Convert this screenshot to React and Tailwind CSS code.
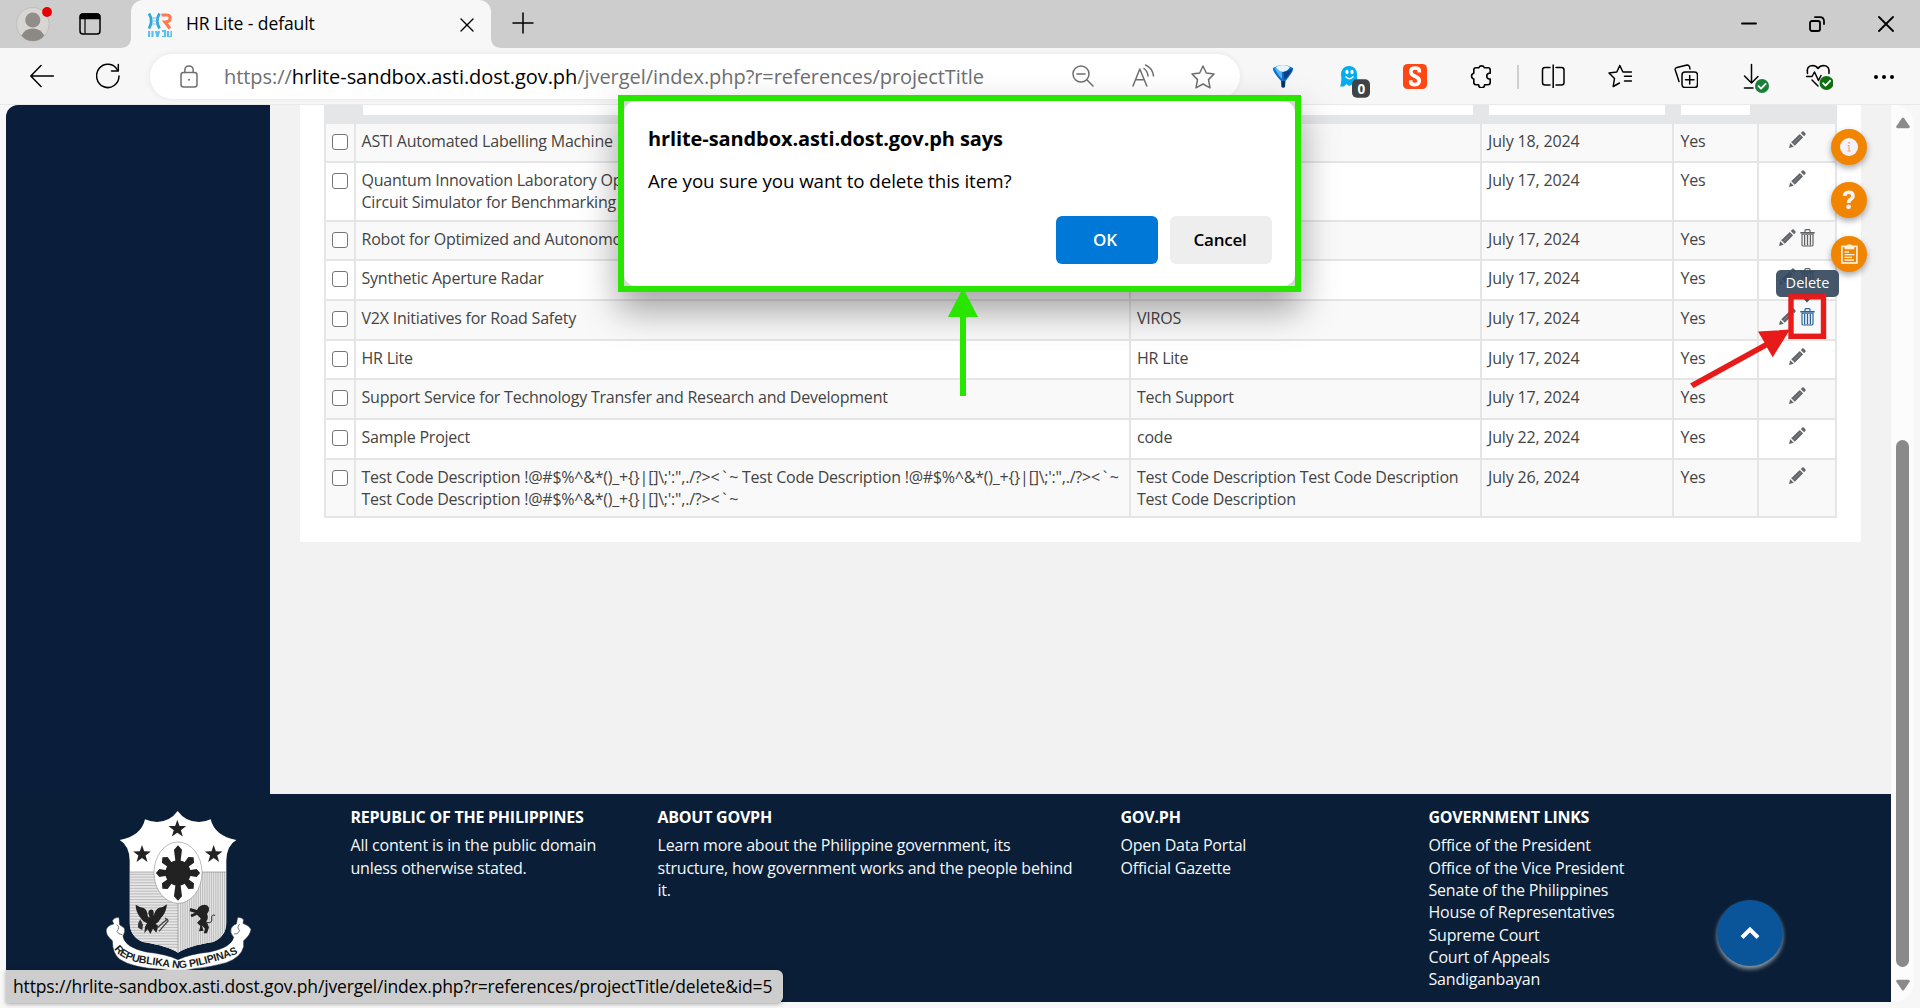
import React from "react";

const PROJECTS = [
  { h: "h-[39px]", lines: ["ASTI Automated Labelling Machine"], code: [], date: "July 18, 2024" },
  { h: "h-[59px]", lines: ["Quantum Innovation Laboratory Op", "Circuit Simulator for Benchmarking"], code: [], date: "July 17, 2024" },
  { h: "h-[39px]", lines: ["Robot for Optimized and Autonomo"], code: [], date: "July 17, 2024", trash: true },
  { h: "h-[40px]", lines: ["Synthetic Aperture Radar"], code: [], date: "July 17, 2024", trash: true },
  { h: "h-[40px]", lines: ["V2X Initiatives for Road Safety"], code: ["VIROS"], date: "July 17, 2024", trash: true, active: true },
  { h: "h-[39px]", lines: ["HR Lite"], code: ["HR Lite"], date: "July 17, 2024" },
  { h: "h-[40px]", lines: ["Support Service for Technology Transfer and Research and Development"], code: ["Tech Support"], date: "July 17, 2024" },
  { h: "h-[40px]", lines: ["Sample Project"], code: ["code"], date: "July 22, 2024" },
  {
    h: "h-[58px]",
    lines: [
      "Test Code Description !@#$%^&*()_+{}|[]\\;':\",./?><`~ Test Code Description !@#$%^&*()_+{}|[]\\;':\",./?><`~",
      "Test Code Description !@#$%^&*()_+{}|[]\\;':\",./?><`~",
    ],
    code: ["Test Code Description Test Code Description", "Test Code Description"],
    date: "July 26, 2024",
  },
];

const FOOTER = [
  { w: "w-[307px]", title: "REPUBLIC OF THE PHILIPPINES", lines: ["All content is in the public domain", "unless otherwise stated."] },
  {
    w: "w-[463px]",
    title: "ABOUT GOVPH",
    lines: ["Learn more about the Philippine government, its", "structure, how government works and the people behind", "it."],
  },
  { w: "w-[308px]", title: "GOV.PH", lines: ["Open Data Portal", "Official Gazette"] },
  {
    w: "w-[300px]",
    title: "GOVERNMENT LINKS",
    lines: [
      "Office of the President",
      "Office of the Vice President",
      "Senate of the Philippines",
      "House of Representatives",
      "Supreme Court",
      "Court of Appeals",
      "Sandiganbayan",
    ],
  },
];

function Svg({ box = "0 0 24 24", className, children, sw = 1.5 }) {
  return (
    <svg viewBox={box} className={"block shrink-0 " + className} fill="none" stroke="currentColor" strokeWidth={sw} strokeLinecap="round" strokeLinejoin="round">
      {children}
    </svg>
  );
}

function Pencil() {
  return (
    <svg viewBox="0 0 17 17" className="block size-[17px] shrink-0" fill="#616569">
      <path d="M0 17 1.2 12.2 4.8 15.8Z" />
      <path d="M2.2 11.2 10.8 2.9 14.1 6.2 5.8 14.8Z" />
      <path d="M11.8 1.9 13.3.5Q14 0 14.7.6L16.4 2.3Q17 3 16.4 3.8L15.1 5.2Z" />
      <path d="M4.2 12.8 12 5" stroke="#8b8e91" strokeWidth=".8" />
    </svg>
  );
}

function Trash({ active }) {
  return (
    <svg viewBox="0 0 15 18" className={"block h-[18px] w-[15px] shrink-0 " + (active ? "text-[#2a6496]" : "text-[#5f6163]")} fill="none" stroke="currentColor">
      <path d="M5 3V1.6Q5 .7 5.8.7H9.2Q10 .7 10 1.6V3" strokeWidth="1.2" />
      <path d="M.3 3.7H14.7" strokeWidth="1.5" />
      <path d="M2 5.2V15.8Q2 17 3.2 17H11.8Q13 17 13 15.8V5.2Z" strokeWidth="1.2" />
      <path d="M4.6 6V16.5M7.5 6V16.5M10.4 6V16.5" strokeWidth="1.3" />
    </svg>
  );
}

function Star5({ x, y, r }) {
  const pts = Array.from({ length: 10 }, (_, i) => {
    const a = (Math.PI / 5) * i - Math.PI / 2;
    const q = i % 2 ? r * 0.4 : r;
    return `${(x + q * Math.cos(a)).toFixed(1)},${(y + q * Math.sin(a)).toFixed(1)}`;
  }).join(" ");
  return <polygon points={pts} fill="#222" />;
}

function Seal() {
  const hatchRows = Array.from({ length: 27 }, (_, i) => 281 + i * 8.4);
  const hatchCols = Array.from({ length: 22 }, (_, i) => 303 + i * 6.6);
  return (
    <svg viewBox="70 85 450 495" className="block h-[165px] w-[150px] shrink-0">
      <defs>
        <clipPath id="shield">
          <path d="M150 274H440V425Q440 468 400 484Q325 496 295 516Q265 496 190 484Q150 468 150 425Z" />
        </clipPath>
        <path id="ribbon" d="M104 504Q122 538 195 549T294 563Q335 562 395 545T480 515" />
      </defs>
      <path
        d="M294 91Q318 124 358 124Q380 122 393 116Q405 166 470 178Q441 194 440 240V425Q440 468 400 484Q325 496 295 516Q265 496 190 484Q150 468 150 425V240Q149 194 120 178Q185 166 196 116Q210 123 232 124Q272 122 294 91Z"
        fill="#fff"
      />
      <g clipPath="url(#shield)">
        <rect x="150" y="274" width="290" height="245" fill="#e6e6e6" />
        <g stroke="#959595" strokeWidth="1.6">
          {hatchRows.map((y) => (
            <path key={y} d={`M150 ${y}H295`} />
          ))}
          {hatchCols.map((x) => (
            <path key={x} d={`M${x} 274V516`} />
          ))}
        </g>
      </g>
      <path d="M150 274H440M295 366V514" stroke="#666" strokeWidth="1.5" />
      <ellipse cx="295" cy="276" rx="72" ry="92" fill="#fff" stroke="#777" strokeWidth="1.5" />
      <circle cx="295" cy="277" r="38" fill="#222" />
      {[0, 45, 90, 135, 180, 225, 270, 315].map((a) => (
        <path
          key={a}
          transform={`rotate(${a} 295 277) translate(295 277) scale(1 ${a % 180 === 0 ? 1 : 0.8})`}
          d="M-7 -30L-12 -70L0 -83L12 -70L7 -30Z"
          fill="#222"
        />
      ))}
      <Star5 x={293} y={145} r={28} />
      <Star5 x={187} y={221} r={28} />
      <Star5 x={402} y={221} r={28} />
      <path
        d="M168 372Q180 380 192 382Q202 386 204 404Q206 414 210 408Q202 394 210 388Q220 384 222 394V406Q226 386 238 381Q252 380 262 371Q260 396 244 412Q238 424 228 430L236 436L230 456L220 444L212 460L204 446L194 458L196 438L202 428Q188 422 180 408Q168 392 168 372Z"
        fill="#222"
      />
      <path d="M182 416Q172 430 176 442L188 448L190 432Z" fill="#333" />
      <path d="M232 442 264 414M238 452 266 420M256 412 266 420" stroke="#444" strokeWidth="4" />
      <path
        d="M366 374Q382 368 388 382Q390 392 382 400Q388 412 380 422L388 440L382 458H372L376 444L366 434L372 450L358 452L362 436L352 426L364 414L352 402L336 410L332 402L346 396L330 392L332 382L352 388Q356 378 366 374Z"
        fill="#222"
      />
      <path d="M382 426Q400 428 396 412Q396 400 406 404" fill="none" stroke="#222" strokeWidth="3" />
      <path
        d="M98 480Q76 462 80 446Q84 434 102 430L98 420Q104 410 118 410L120 432L134 442Q138 452 130 466Q134 500 200 514Q260 520 295 537Q330 520 390 514Q456 500 462 470Q450 456 454 444Q460 432 470 430L474 410Q488 410 492 418L490 428Q510 436 514 446Q512 464 492 480V498Q484 530 440 546Q390 560 345 564L295 574L245 566Q160 562 120 536Q98 518 98 480Z"
        fill="#fff"
        stroke="#0a1f37"
        strokeWidth="1.5"
      />
      <path d="M112 432Q122 440 112 452Q116 462 128 462M480 430Q470 440 480 450Q474 462 464 460" fill="none" stroke="#333" strokeWidth="2" />
      <text className="font-['Liberation_Sans']" fontSize="32" fontWeight="700" fill="#222">
        <textPath href="#ribbon" textLength="392" lengthAdjust="spacing">
          REPUBLIKA NG PILIPINAS
        </textPath>
      </text>
    </svg>
  );
}

function CheckBadge({ color }) {
  return (
    <>
      <circle cx="7" cy="7" r="7" fill={color} stroke="none" />
      <path d="M3.6 7.2 6 9.6 10.6 4.8" stroke="#fff" strokeWidth="1.8" fill="none" />
    </>
  );
}

function TitleBar() {
  return (
    <div className="flex h-12 items-start bg-[#cdcdcd] text-black">
      <svg viewBox="0 0 40 48" className="ml-[13px] h-12 w-10 shrink-0">
        <ellipse cx="19.8" cy="24.2" rx="16.3" ry="16.8" fill="#d8d6d2" stroke="#c2bfb9" />
        <ellipse cx="19.8" cy="20" rx="7.6" ry="7.6" fill="#918e8a" />
        <path d="M8.4 35.5Q12 28.5 19.8 28.5T31.4 35.5Q27 41 19.8 41T8.4 35.5Z" fill="#8c8985" />
        <circle cx="34" cy="12" r="4.9" fill="#e60000" />
      </svg>
      <Svg box="0 0 22 22" className="mt-[13px] ml-[26px] size-[22px]">
        <rect x="1" y="1" width="20" height="20" rx="3" />
        <path d="M1.5 5.5V4Q1.5 1 4 1H18Q20.5 1 20.5 4V5.5Z" fill="#000" />
        <path d="M6 6V20" strokeWidth="1.2" />
      </Svg>
      <div className="ml-[19px] flex w-[11px] flex-col">
        <div className="h-[37px]" />
        <svg viewBox="0 0 11 11" className="block size-[11px]">
          <path d="M0 11H11V0Q11 11 0 11Z" fill="#f7f7f7" />
        </svg>
      </div>
      <div className="flex h-12 w-[360px] items-start rounded-t-xl bg-[#f7f7f7]">
        <svg viewBox="0 0 24 24" className="mt-[13px] ml-[17px] block size-6 shrink-0">
          <path d="M1 .5Q5.5 8 1 15.5M11.5.5Q7 8 11.5 15.5" stroke="#2fa8e0" strokeWidth="2.8" fill="none" />
          <path d="M4 5H9M4 8H9M4 11H9" stroke="#6fc6ec" strokeWidth="1.2" fill="none" />
          <path d="M13.5 2H19Q22.5 2 22 6Q21.5 9 17 9L22 15.5" stroke="#ff7a52" strokeWidth="3.2" fill="none" />
          <path d="M1 18V24M4.5 18V24M8 18 9.5 24 11 18M14 18H17V24H14M20 18V24H23.5V18" stroke="#5cc0ec" strokeWidth="2.2" fill="none" />
        </svg>
        <span className="mt-[11px] ml-[14px] w-[200px] text-[17.5px] leading-6 tracking-[-0.08px]">HR Lite - default</span>
        <Svg box="0 0 14 14" className="mt-[18px] ml-[74px] size-[14px]" sw={1.4}>
          <path d="M1 1 13 13M13 1 1 13" />
        </Svg>
      </div>
      <svg viewBox="0 0 11 11" className="mt-[37px] block size-[11px]">
        <path d="M11 11H0V0Q0 11 11 11Z" fill="#f7f7f7" />
      </svg>
      <Svg box="0 0 22 22" className="mt-[12px] ml-[10px] size-[22px]">
        <path d="M11 1V21M1 11H21" />
      </Svg>
      <div className="ml-auto flex pt-[15.5px] pr-[26.5px]">
        <Svg box="0 0 16 16" className="mr-[52px] size-4" sw={1.8}>
          <path d="M1 7.5H15" />
        </Svg>
        <Svg box="0 0 16 16" className="mr-[53px] size-4" sw={1.8}>
          <rect x="1" y="5" width="10" height="10" rx="2" />
          <path d="M6 1.2H11Q15 1.2 15 5.5V8" />
        </Svg>
        <Svg box="0 0 16 16" className="size-4" sw={1.8}>
          <path d="M1 1 15 15M15 1 1 15" />
        </Svg>
      </div>
    </div>
  );
}

function Toolbar() {
  return (
    <div className="flex h-[57px] items-start border-b border-[#e9e9e9] bg-[#f7f7f7] text-black">
      <Svg box="0 0 24 24" className="mt-4 ml-[30px] size-6">
        <path d="M23.5 12H1M11 1.5 .8 12 11 22.5" />
      </Svg>
      <Svg box="0 0 24 26" className="mt-[15px] ml-[42px] h-[26px] w-6">
        <path d="M21.5 7A11.2 11.7 0 1 0 23 13" />
        <path d="M22.3 1.5V8H15.5" />
      </Svg>
      <div className="mt-1.5 ml-[30px] flex h-[45px] w-[1090px] items-start rounded-full bg-white text-[#6f6f6f] shadow-[0_0_6px_rgba(0,0,0,0.08)]">
        <Svg box="0 0 18 23" className="mt-[11px] ml-[30px] h-[23px] w-[18px]">
          <rect x="1" y="7.5" width="16" height="14.5" rx="2.5" />
          <path d="M4.8 7.5V5Q5 1 9 1T13.2 5V7.5" />
          <circle cx="9" cy="14.7" r="1" fill="currentColor" stroke="none" />
        </Svg>
        <p className="mt-[8.5px] ml-[26px] w-[848px] text-[20px] leading-7 tracking-[-0.06px] whitespace-nowrap">
          https://<span className="text-black">hrlite-sandbox.asti.dost.gov.ph</span>/jvergel/index.php?r=references/projectTitle
        </p>
        <Svg box="0 0 22 22" className="mt-[11px] size-[22px]">
          <circle cx="9" cy="9" r="8" />
          <path d="M14.8 14.8 21 21M5 9H13" />
        </Svg>
        <Svg box="0 0 24 24" className="mt-[10px] ml-[37px] size-6">
          <path d="M2 22 8.8 5 15.8 22M4.5 15.8H13.2" />
          <path d="M13 4.5Q16.5 7 17 12M14.5 1Q21.5 4 22.5 12" />
        </Svg>
        <Svg box="0 0 24 24" className="mt-[11px] ml-[36px] size-6">
          <path d="M12 1 15.3 8 23 9 17.5 14.6 19 22.8 12 19 5 22.8 6.5 14.6 1 9 8.7 8Z" />
        </Svg>
      </div>
      <svg viewBox="0 0 24 26" className="mt-[15px] ml-[31px] block h-[26px] w-6 shrink-0">
        <path d="M2 5Q12-1 22 5 23 8 14.5 18L14 24Q12 26 10.5 24L10 18Q1 8 2 5Z" fill="#0a6fd0" />
        <path d="M3.5 5Q8 2 11 2.5L11 16Q7 12 4.5 7Z" fill="#58b4f5" />
        <path d="M5 4Q12 0 19 4Q17 8 12 9Q7 8 5 4Z" fill="#e4f5ff" />
        <path d="M12.5 9Q18 8 21.5 5.5Q20 10 13.5 17Z" fill="#0b3f80" />
        <path d="M10.4 18H14.2L13.8 24H10.7Z" fill="#093258" />
      </svg>
      <svg viewBox="0 0 32 34" className="mt-[17px] ml-[43px] block h-[34px] w-8 shrink-0">
        <path d="M3 9Q4 1 11 1T19 9V19L16 17 13.5 20 11 21 8.5 19 6 21.5 2 21.5Q4 17 3 9Z" fill="#00aef0" />
        <ellipse cx="9" cy="7" rx="1.6" ry="2.3" fill="#fff" />
        <ellipse cx="14" cy="7" rx="1.6" ry="2.3" fill="#fff" />
        <path d="M7.5 11.5Q11.5 16 15.5 11.5" stroke="#fff" strokeWidth="1.4" fill="none" />
        <rect x="14" y="14.2" width="18" height="18.5" rx="5" fill="#3f4348" />
        <text x="23.3" y="28.6" textAnchor="middle" fontSize="13.5" fontWeight="700" fill="#fff">
          0
        </text>
      </svg>
      <svg viewBox="0 0 24 25" className="mt-4 ml-[33px] block h-[25px] w-6 shrink-0">
        <rect width="24" height="25" rx="4.5" fill="#ff4713" />
        <path d="M16.3 8.5V6.5Q16 4 12 4T7.8 7.3Q7.6 10.5 12 12.2T16.3 17.2Q16 20.6 12 20.6T7.8 18.5V16.3" stroke="#fff" strokeWidth="3.6" fill="none" />
      </svg>
      <Svg className="mt-4 ml-[42px] size-6" sw={1.6}>
        <path d="M7 3.8H9.8A3 3 0 0 1 15.4 3.8H19Q21.2 3.8 21.2 6V9.2H20A3 3 0 0 0 20 15H21.2V18.6Q21.2 20.8 19 20.8H15.6A3 3 0 0 1 9.6 20.8H7Q4.8 20.8 4.8 18.6V15A3 3 0 0 1 4.8 9.2V6Q4.8 3.8 7 3.8Z" />
      </Svg>
      <div className="mt-[17px] ml-[24px] h-6 w-0.5 bg-[#cfcfcf]" />
      <Svg className="mt-4 ml-[22px] size-6">
        <path d="M9 3.5H4Q1.5 3.5 1.5 6V18.5Q1.5 21 4 21H9M15 3.5H20.5Q23 3.5 23 6V18.5Q23 21 20.5 21H15M12.2 1V24" />
      </Svg>
      <Svg className="mt-4 ml-[43px] size-6">
        <path d="M16 8 14.8 7.8 11.8 1.5 8.8 8 1 9 6.5 14.5 5.2 22.5 11.5 19M16.5 12.2H23.5M16.5 17H23.5M15 8H23.5" />
      </Svg>
      <Svg className="mt-4 ml-[42px] size-6">
        <path d="M5 17.5Q2 8 1.2 6Q.8 4 3 3.4L13 1.1Q15.5 1 16 5" />
        <rect x="8" y="8" width="15.5" height="15.5" rx="3" />
        <path d="M15.7 11.5V20M11.5 15.7H20" />
      </Svg>
      <Svg box="0 0 28 30" className="mt-[15px] ml-[44px] h-[30px] w-7">
        <path d="M9.5 1.5V19M2.5 13 9.5 20 16 13.5M2.5 25H11" />
        <g transform="translate(13 16)">
          <CheckBadge color="#1a8038" />
        </g>
      </Svg>
      <Svg box="0 0 28 30" className="mt-[15px] ml-[35px] h-[30px] w-7">
        <path d="M2.5 10.5Q1 3 7.5 2.5Q11 2.5 13 5.5Q15 2.5 18.8 2.5Q25 3 24 10.5M1.5 13.5H7L9.5 9 13.5 17.5 16 12.5M7 17 13 23" />
        <g transform="translate(14.5 13)">
          <CheckBadge color="#107010" />
        </g>
      </Svg>
      <svg viewBox="0 0 24 24" className="mt-[17px] ml-[39px] block size-6 shrink-0">
        <circle cx="4" cy="12" r="2" />
        <circle cx="12" cy="12" r="2" />
        <circle cx="20" cy="12" r="2" />
      </svg>
    </div>
  );
}

function Line({ text }) {
  return (
    <p>
      {text.split("`").map((part, i) => (
        <React.Fragment key={i}>
          {i > 0 && <span className="px-[2.8px]">`</span>}
          {part}
        </React.Fragment>
      ))}
    </p>
  );
}

function ProjectTable() {
  return (
    <div className="w-[1513px] border-x-2 border-[#e5e6e8] text-[16px] leading-[22.3px] tracking-[-0.22px] text-[#444]">
      <div className="flex h-[19px] items-start bg-[#e5e6e8]">
        <div className="ml-[37px] h-[10px] w-[760px] bg-white" />
        <div className="ml-[15px] h-[10px] w-[335px] bg-white" />
        <div className="ml-4 h-[10px] w-[176px] bg-white" />
        <div className="ml-4 h-[10px] w-[69px] bg-white" />
      </div>
      {PROJECTS.map((p, i) => (
        <div key={i} className={"flex border-b-2 border-[#e5e5e5] " + p.h + (i % 2 ? " bg-white" : " bg-[#f9f9f9]")}>
          <div className="w-[30px] shrink-0 border-r-2 border-[#e5e5e5] pt-[10px] pl-[6px]">
            <div className="size-4 rounded-[3px] border-[1.5px] border-[#767676] bg-white" />
          </div>
          <div className="w-[775px] shrink-0 border-r-2 border-[#e5e5e5] pt-[5.5px] pl-[5.5px] whitespace-nowrap">
            {p.lines.map((t, k) => (
              <Line key={k} text={t} />
            ))}
          </div>
          <div className="w-[351px] shrink-0 border-r-2 border-[#e5e5e5] pt-[5.5px] pl-[6px] whitespace-nowrap">
            {p.code.map((t, k) => (
              <Line key={k} text={t} />
            ))}
          </div>
          <div className="w-[192px] shrink-0 border-r-2 border-[#e5e5e5] pt-[5.5px] pl-[6px] tracking-[-0.15px]">{p.date}</div>
          <div className="w-[85px] shrink-0 border-r-2 border-[#e5e5e5] pt-[5.5px] pl-[6.5px]">Yes</div>
          <div className="flex grow items-start justify-center gap-1 pt-[7px]">
            <Pencil />
            {p.trash && <Trash active={p.active} />}
          </div>
        </div>
      ))}
    </div>
  );
}

function ConfirmDialog() {
  return (
    <div className="absolute top-[95px] left-[618px] h-[197px] w-[683px] border-[6px] border-[#28e600] bg-[#d6d6d6] shadow-[0_18px_34px_rgba(0,0,0,0.36)]">
      <div className="flex h-full flex-col rounded-xl bg-white pr-[23px] pl-6 text-black">
        <h2 className="mt-[23px] text-[20px] leading-[30px] font-bold tracking-[-0.1px]">hrlite-sandbox.asti.dost.gov.ph says</h2>
        <p className="mt-[13px] text-[18.75px] leading-[28px] tracking-[-0.08px]">Are you sure you want to delete this item?</p>
        <div className="mt-[21px] flex justify-end gap-3 text-[17px] font-semibold tracking-[-0.2px]">
          <button className="h-12 w-[102px] rounded-md bg-[#0078d7] pr-1 text-white">OK</button>
          <button className="h-12 w-[102px] rounded-md bg-[#eee] pr-0.5">Cancel</button>
        </div>
      </div>
    </div>
  );
}

function FloatButton({ children }) {
  return <div className="flex size-9 items-center justify-center rounded-full bg-[#f28500] shadow-[0_3px_6px_rgba(0,0,0,0.35)]">{children}</div>;
}

function FloatingTools() {
  return (
    <div className="absolute top-[129px] left-[1831px] flex flex-col gap-[17px]">
      <FloatButton>
        <svg viewBox="0 0 18 18" className="block size-[18px]">
          <circle cx="9" cy="9" r="9" fill="#f3f1fb" />
          <rect x="8.3" y="4" width="1.5" height="1.6" fill="#f2a24a" />
          <path d="M7.6 7.5H9V12.8M7.4 13H10.6" stroke="#f2a24a" strokeWidth="1" fill="none" />
        </svg>
      </FloatButton>
      <FloatButton>
        <svg viewBox="0 0 14 20" className="block h-5 w-3.5">
          <path d="M2.5 6Q2.8 2.3 6.8 2.2T11 5.8Q11 8 8.6 9.3Q6.6 10.4 6.6 13" stroke="#f3f1fb" strokeWidth="3.6" fill="none" />
          <circle cx="6.6" cy="16.8" r="2.4" fill="#f3f1fb" />
        </svg>
      </FloatButton>
      <div className="pt-px">
        <FloatButton>
          <svg viewBox="0 0 17 20" className="block h-5 w-[17px]" fill="none" stroke="#fff3e0">
            <rect x=".9" y="2.4" width="15" height="16.6" strokeWidth="1.6" />
            <path d="M4 4.8V3Q6 3 6.4 1H10.4Q10.8 3 12.8 3V4.8Z" fill="#fff3e0" />
            <path d="M3.5 8H8M3.5 10.7H13.5M3.5 13.3H11M3.5 16H13" strokeWidth="1.3" />
          </svg>
        </FloatButton>
      </div>
    </div>
  );
}

export default function App() {
  return (
    <div className="relative h-[1008px] w-[1920px] overflow-hidden bg-[#f7f7f7] font-['Open_Sans','Noto_Sans',sans-serif]">
      <TitleBar />
      <Toolbar />

      <div className="ml-1.5 flex h-[897px] w-[1908px] overflow-hidden rounded-tl-xl rounded-tr-[20px] rounded-br-[20px]">
        <div className="flex w-[1885px] shrink-0 flex-col">
          <div className="flex h-[689px]">
            <div className="w-[264px] shrink-0 bg-[#0a1e3c]" />
            <div className="grow bg-[#f2f2f2] pl-[30px]">
              <div className="h-[437px] w-[1561px] bg-white pl-6">
                <ProjectTable />
              </div>
            </div>
          </div>
          <footer className="flex h-[208px] bg-[#0a1f37] text-[16px] leading-[22.3px] tracking-[-0.2px] text-[#f6f7f8]">
            <div className="w-[344.5px] shrink-0 pt-[14.5px] pl-[97px]">
              <Seal />
            </div>
            {FOOTER.map((c) => (
              <div key={c.title} className={"shrink-0 pt-[11.5px] whitespace-nowrap " + c.w}>
                <h3 className="mb-[6.7px] font-bold tracking-[-0.24px] text-white">{c.title}</h3>
                {c.lines.map((t) => (
                  <p key={t}>{t}</p>
                ))}
              </div>
            ))}
          </footer>
        </div>
        <div className="flex w-[23px] flex-col items-center bg-[#fcfcfc]">
          <svg viewBox="0 0 14 12" className="mt-3 block h-3 w-3.5" fill="#8a8a8a">
            <path d="M6 1Q7 0 8 1L13.8 9.5Q14 11.3 12.5 11.3H1.5Q0 11.3.2 9.5Z" />
          </svg>
          <div className="mt-[311px] h-[527px] w-[13px] rounded-full bg-[#8a8a8a]" />
          <svg viewBox="0 0 14 12" className="mt-3 block h-3 w-3.5" fill="#8a8a8a">
            <path d="M6 11Q7 12 8 11L13.8 2.5Q14 .7 12.5.7H1.5Q0 .7.2 2.5Z" />
          </svg>
        </div>
      </div>

      <div className="absolute top-[970px] left-1.5 flex h-[33px] w-[777px] items-center rounded-tr-md rounded-br-md bg-[#cdcdcd] pl-[7px] text-[17.5px] tracking-[-0.16px] whitespace-nowrap text-black shadow-[0_1px_4px_rgba(0,0,0,0.35)]">
        https://hrlite-sandbox.asti.dost.gov.ph/jvergel/index.php?r=references/projectTitle/delete&amp;id=5
      </div>

      <div className="absolute top-[900px] left-[1717px] flex size-[66px] items-center justify-center rounded-full bg-[#0a5599] shadow-[0_3px_4px_rgba(255,255,255,0.55)]">
        <svg viewBox="0 0 20 14" className="block h-3.5 w-5" fill="none" stroke="#fff" strokeWidth="4">
          <path d="M2 11.5 10 3.5 18 11.5" />
        </svg>
      </div>

      <FloatingTools />

      <div className="absolute top-[270px] left-[1776px] flex h-[27px] w-[63px] items-center justify-center rounded-[5px] bg-[#34495e]/92 pb-0.5 text-[14.5px] text-white">Delete</div>
      <svg viewBox="0 0 160 110" className="absolute top-[290px] left-[1680px] block h-[110px] w-40">
        <path d="M122 7H132L127 12.5Z" fill="#34495e" />
        <rect x="111" y="6.8" width="32.5" height="39.5" fill="none" stroke="#e81b1b" strokeWidth="5.4" />
        <path d="M110 39.5 78 41.5 84.5 52.5 10 93.5 13.5 98 87 57.5 92.7 67.3Z" fill="#e81b1b" />
      </svg>

      <ConfirmDialog />
      <svg viewBox="0 0 30 106" className="absolute top-[290px] left-[948px] block h-[106px] w-[30px]" fill="#28e600">
        <path d="M14 0H16L30 27H18V106H12V27H0Z" />
      </svg>
    </div>
  );
}
